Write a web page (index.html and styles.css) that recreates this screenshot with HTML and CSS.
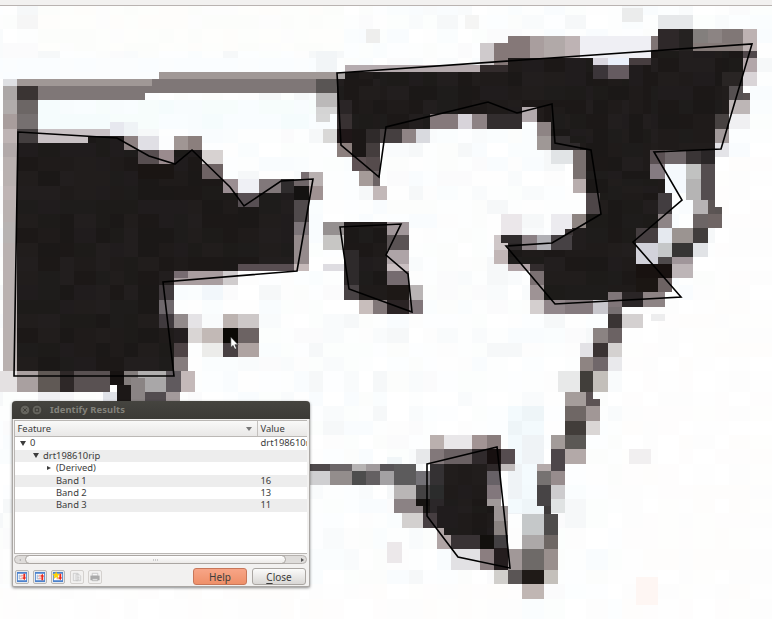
FILE: index.html
```html
<!DOCTYPE html>
<html lang="en">
<head>
<meta charset="utf-8">
<title>Identify Results</title>
<link rel="stylesheet" href="styles.css">
</head>
<body>
<main class="canvas">
  <svg class="map" viewBox="0 0 772 619">
    <g id="raster" shape-rendering="crispEdges"></g>
    <g class="outline">
      <path d="M18 132 117 138 149 156 175 164 192 150 230 187 244 206 281 181 313 179 297 271 163 282 174 376H14Z"/>
      <path d="M337 73 752 44 721 149 654 152 682 200 633 242 681 297 555 304 506 246 552 243 601 214 591 150 555 143 552 104 517 113 488 102 386 127 379 177 341 145Z"/>
      <path d="M340 227 401 224 386 255 408 274 412 312 349 289Z"/>
      <path d="M427 464 497 447 510 568 458 557 427 516Z"/>
    </g>
    <path class="pointer" d="M230.800 337v10.500l2.300-2.100 1.700 3.900 1.800-.8-1.700-3.800h3.200Z"/>
  </svg>
  <div class="top-edge"></div>

  <section class="dialog">
    <header class="titlebar">
      <svg class="window-buttons" viewBox="0 0 24 12">
        <circle cx="6" cy="6" r="4.900"/><circle cx="18" cy="6" r="4.900"/>
        <path d="m4.200 4.200 3.600 3.600m0-3.600L4.200 7.800M16.300 4.300h3.400v3.400h-3.400Z"/>
      </svg>
      <span class="title">Identify Results</span>
    </header>
    <div class="tree">
      <div class="row head"><span class="feature">Feature</span><i class="down sort"></i><span class="value">Value</span></div>
      <div class="row"><span class="feature l0"><i class="down"></i>0</span><span class="value">drt198610rip</span></div>
      <div class="row alt"><span class="feature l1"><i class="down"></i>drt198610rip</span></div>
      <div class="row"><span class="feature l2"><i class="right"></i>(Derived)</span></div>
      <div class="row alt"><span class="feature l3">Band 1</span><span class="value">16</span></div>
      <div class="row"><span class="feature l3">Band 2</span><span class="value">13</span></div>
      <div class="row alt"><span class="feature l3">Band 3</span><span class="value">11</span></div>
    </div>
    <div class="scrollbar"><i class="arrow-left"></i><div class="thumb"><i></i><i></i><i></i></div><i class="arrow-right"></i></div>
    <footer class="actions">
      <button class="tool"><svg viewBox="0 0 13 13"><path fill="#4c82cc" d="M1 1h11v11H1z"/><path fill="#fff" d="M2 3h9v7H2z"/><path stroke="#7799c3" d="M3.500 4v5M4 5.500h2M4 8.500h2"/><path fill="#f4aaa0" d="M5 4h3v2H5zM5 7h3v2H5z"/><path fill="#e9281c" d="M8 3h2v4h1L9 10 7 7h1z"/></svg></button>
      <button class="tool"><svg viewBox="0 0 13 13"><path fill="#4c82cc" d="M1 1h11v11H1z"/><path fill="#fff" d="M2 3h9v7H2z"/><path stroke="#7799c3" d="M3.500 4v5M4 5.500h2M4 8.500h2"/><path fill="#f4aaa0" d="M5 4h3v2H5zM5 7h3v2H5z"/><path fill="#e9281c" d="m9 3 2 3h-1v4H8V6H7z"/></svg></button>
      <button class="tool"><svg viewBox="0 0 13 13"><path fill="#4c82cc" d="M1 1h11v11H1z"/><path fill="#fff" d="M2 3h9v7H2z"/><path fill="#f4aaa0" d="M5 7h3v2H5z"/><path fill="#e9281c" d="M8 3h2v4h1L9 10 7 7h1z"/><path fill="#ffd900" stroke="#eebb10" stroke-width=".4" d="m4.500.800 1 2.500 2.700.2-2 1.800.7 2.900-2.400-1.600L2 8.200l.7-2.900-2-1.800 2.700-.2z"/></svg></button>
      <button class="tool off"><svg viewBox="0 0 13 13"><path fill="#eee" stroke="#c4c4c4" d="M2.500 2.500h5v8h-5zM5.500 3.500h3l2 2v5h-5z"/><path stroke="#ccc" d="M7 7h2M7 9h2"/></svg></button>
      <button class="tool off"><svg viewBox="0 0 13 13"><path fill="#f5f5f5" stroke="#bbb" d="M3.500 2.500h6v3h-6z"/><path fill="#a9a9a9" d="M1.500 5h10v5h-10z"/><path fill="#eee" stroke="#aaa" d="M3.500 8.500h6v2h-6z"/></svg></button>
      <button class="button help">Help</button>
      <button class="button"><u>C</u>lose</button>
    </footer>
  </section>
</main>
<script src="map.js"></script>
</body>
</html>
```
FILE: styles.css
```css
* { box-sizing: border-box; }
body { margin: 0; overflow: hidden; font: 9.4px/12px "Noto Sans", sans-serif; color: #3c3c3c; }
.canvas { position: relative; width: 772px; height: 619px; background: #fdfefe; }
.map { display: block; width: 772px; height: 619px; }
.outline { fill: none; stroke: #000; stroke-width: 1.6; }
.pointer { fill: #fff; stroke: #222; stroke-width: .6; }
.top-edge { position: absolute; inset: 0 0 auto; height: 6px; background: #f2f1f0; border-bottom: 1px solid #b9b3b1; }

.dialog { position: absolute; left: 12px; top: 401px; width: 298px; height: 186px; display: flex; flex-direction: column; background: #f2f1f0; border: 1px solid #aaa7a4; border-top: 0; border-radius: 4px 4px 2px 2px; box-shadow: 0 1px 3px #0007; }
.titlebar { height: 18px; flex: none; margin: 0 -1px; padding-left: 7px; display: flex; align-items: center; gap: 7px; border-radius: 4px 4px 0 0; background: linear-gradient(#45443f, #3b3a36); }
.window-buttons { width: 24px; height: 12px; fill: #65645e; stroke: #35342f; stroke-width: .8; }
.title { font-weight: 700; color: #83827b; font-size: 9.4px; letter-spacing: .08px; }

.tree { height: 134px; flex: none; margin: 1px 2px 0 1px; border: 1px solid #bab7b4; border-right: 0; background: #fff; overflow: hidden; }
.row { display: flex; height: 12.4px; line-height: 12.4px; white-space: nowrap; overflow: hidden; }
.alt { background: #ededed; }
.head { height: 16.400px; line-height: 16.400px; background: linear-gradient(#f9f9f8, #e9e8e7); border-bottom: 1px solid #bbb8b5; position: relative; }
.feature { width: 242.5px; flex: none; display: flex; align-items: center; }
.head .feature { padding-left: 2.500px; border-right: 1px solid #c4c1be; }
.value { padding-left: 3px; }
.l0 { padding-left: 5px; gap: 4px; }
.l1 { padding-left: 18px; gap: 4px; }
.l2 { padding-left: 32px; gap: 5px; }
.l3 { padding-left: 41px; }
.down { border: 3px solid transparent; border-top: 5px solid #3c3c3c; border-bottom: 0; }
.right { border: 2.500px solid transparent; border-left: 4px solid #3c3c3c; border-right: 0; }
.sort { position: absolute; left: 231px; top: 6px; border-top-color: #777; border-top-width: 4px; }

.scrollbar { height: 9px; flex: none; margin: 1px 2px 0 1px; display: flex; align-items: center; border: 1px solid #b5b1ae; border-radius: 5px; background: #dedcda; }
.thumb { width: 261px; height: 9px; margin-left: 8px; display: flex; justify-content: center; align-items: center; gap: 1px; border: 1px solid #aaa6a2; border-radius: 5px; background: linear-gradient(#fff, #eceae8); }
.thumb i { width: 1px; height: 2px; background: #ccc; }
.arrow-left { width: 0; margin-left: 4px; margin-right: -4px; border: 1.5px solid transparent; border-right: 2px solid #aaa; border-left: 0; }
.arrow-right { margin-left: auto; margin-right: 2px; border: 2px solid transparent; border-left: 3px solid #555; border-right: 0; }

.actions { height: 17px; margin-top: 4px; display: flex; align-items: center; gap: 4px; padding: 0 3px 0 2px; }
.tool { width: 14px; height: 14px; flex: none; padding: 0; border: 1px solid #b8b5b2; border-radius: 2px; background: #f2f1f0; display: flex; }
.tool svg { width: 12px; height: 12px; fill: none; stroke-width: .8; }
.off { border-color: #d4d1ce; }
.button { width: 54px; height: 17px; padding: 0; font: inherit; font-size: 10px; line-height: 14px; color: #3c3c3c; border: 1px solid #aaa6a2; border-radius: 3px; background: linear-gradient(#fbfbfa, #d9d7d5); }
.help { margin-left: auto; border-color: #c7775a; background: linear-gradient(#f7a587, #ef9069); }
u { text-underline-offset: 2px; }
.tool + .tool { margin-left: .2px; }
.help + .button { margin-left: 1px; }
```
FILE: map.js
```js
// Raster cell boundaries.
const xs = [0,3,17,38,60,74,96,110,124,138,159,174,188,202,223,238,259,281,294,309,323,344,359,373,387,409,423,437,458,472,487,508,522,544,565,586,608,622,643,658,679,693,715,729,750,772];
const ys = [6,15,29,43,58,72,86,100,114,129,143,157,171,186,200,214,228,243,257,271,285,300,314,328,343,357,371,392,406,421,435,449,464,485,499,513,528,549,570,584,599,619];

// Deterministic variation between neighbouring cells.
let seed = 71;
const rnd = () => (seed = (seed * 16807) % 2147483647) / 2147483647;
const light = ['fdfeff','fafdfe','fdfdfd','fcfefd','fefefe','f9fcfe','fbfbfc','f9fbfc','fdfefe','f6f8f9','ffffff','fcfdfc','fdfefe','fcfeff'];
const warm = ['fefefd','fefdfd','fdfdfd','ffffff','fefefe','fefdfc','fdfdfd'];
const dark = ['1f1b1a','1c1817','211d1c','1e1c1b','221e1e','1b1817','201c1d','1d1b19'];

let out = '';
const rect = (x1, x2, y1, y2, c) => {
  out += `<rect x="${x1}" y="${y1}" width="${x2 - x1}" height="${y2 - y1}" fill="#${c}"/>`;
};
const tiles = (x1, x2, y1, y2, colors) => {
  const cx = [x1, ...xs.filter(x => x > x1 && x < x2), x2];
  const cy = [y1, ...ys.filter(y => y > y1 && y < y2), y2];
  for (let j = 1; j < cy.length; j++)
    for (let i = 1; i < cx.length; i++)
      rect(cx[i - 1], cx[i], cy[j - 1], cy[j], colors[Math.floor(rnd() * colors.length)]);
};

tiles(0, 772, 6, 619, light);
tiles(38, 344, 6, 51, ['fdfefc','fefefc','fcfdfb','fefdfb','fdfdfd']);
tiles(715, 772, 157, 392, warm);
tiles(622, 772, 300, 619, warm);
tiles(300, 522, 584, 619, warm);
tiles(0, 300, 588, 619, warm);
tiles(38, 316, 100, 129, ['f5fcfd','f8fcfe','f7fdfc','f9fdff']);
tiles(0, 316, 58, 79, ['fafdff','fbfdfe']);
tiles(508, 544, 406, 514, ['eef5f8','f4fbfe','eff3f6','f3fafd']);

// x1 x2 y1 y2 colour; "d" marks dense shadow cells.
const cells = `
17 138 143 371 d;110 124 136 143 d;138 159 164 371 d;174 202 150 271 d;159 174 164 285 d;202 223 179 271 d;223 238 193 271 d;238 259 207 264 d;259 294 193 264 d
159 174 328 371 d;17 38 129 143 433e3f;38 110 129 136 c8c1c4;38 88 136 143 c8c1c4;88 110 136 143 d;110 124 122 136 e7e8ef;124 138 122 136 eff3f6
124 138 136 150 8d8182;138 159 136 150 e0dfe5;138 159 150 164 574e50;159 174 136 150 fcfdfe;159 174 150 164 9a8b8e;174 188 136 150 a09694;188 202 136 150 8b7f7d;138 159 164 179 1a1513;159 174 164 179 1a1513
202 223 150 164 d7d2d1;202 223 164 179 6e6364;223 238 179 193 9a8e92;238 259 179 193 eff0f5;238 259 193 207 574f53;259 281 179 193 81787a;281 294 179 193 2f2c2d;294 309 179 186 6f6668;294 309 186 200 141211;294 309 200 222 504a4c;301 309 172 179 776d70;309 323 172 186 b8b0b0;309 323 186 200 9f9292;294 309 222 235 7d7579;294 309 235 264 958b8c;238 294 264 271 594e52;294 309 264 271 c5b9b9
174 188 271 278 776c71;188 223 271 278 a89d9f;174 223 278 285 a89d9f;223 238 271 285 d0cccd;159 174 285 300 403a3d;159 174 300 314 6e686c;159 174 314 328 403a3e;174 188 314 328 928a8b;174 188 328 343 231e1f;174 188 343 357 4e4446;174 188 357 371 857c7d;188 202 314 328 e5e3e6;188 202 328 343 d9d5d4
0 17 371 392 e4e1e2;17 38 371 392 a9a0a0;38 60 371 392 605955;60 74 371 392 2e2828;74 110 371 392 595152;110 124 371 385 171312;117 131 385 401 1c1817;124 138 371 385 837d7c;131 145 378 401 8a8484;138 166 371 378 b1afaf;145 166 378 392 a9a7a8;145 166 392 401 524c4f;166 181 371 392 605a5e;166 180 392 401 a39a9b;181 195 371 392 c4b9b9;38 60 392 401 f0f0f3;60 74 392 401 f6f6f8;103 117 392 401 e0e2e8
3 17 79 86 dfe0e3;3 17 86 100 aca7a6;3 17 100 114 b1acab;3 17 114 129 a89d9c;3 17 129 143 beb4b4;3 17 143 157 b1a9a9;3 17 157 371 b9b1b0;3 17 186 200 beb4b4;3 17 222 243 b7b3b2
17 152 79 86 a09896;159 337 72 79 a09896;152 316 79 93 7f7777;38 145 86 100 7f7777;145 152 86 93 7f7777;17 38 86 100 3a3433;17 38 100 114 6c6665;17 38 114 129 767070;316 337 79 93 595554;316 337 93 107 bbb9b9;316 337 107 114 d4d4d4;316 330 114 122 d6d6d6;323 337 129 143 d9d8d7;316 337 51 72 f2f5f7;17 38 15 29 f6f6f6
337 380 79 129 d;380 480 72 114 d;345 380 72 79 d;337 345 72 79 aaa6a5;345 480 65 72 b5abae;337 352 100 114 2a2526;337 352 114 129 383132;337 352 129 143 1f1718;337 352 143 157 8b7f7d;352 366 129 157 1b1716;352 366 157 171 5e5254;366 380 129 143 2f2a2a;366 380 143 157 443d3d;366 380 157 171 554b4c;359 373 171 179 a59b99;359 373 179 186 a59b99;373 380 171 186 6b6263;373 387 186 200 c2b8b8
380 430 114 129 d;380 402 129 143 453f40;402 416 129 143 8f8485;416 430 129 143 d9dadf;430 458 114 129 85797b;458 472 114 129 d8d4da;472 487 114 129 8d8284;487 522 114 129 322d2e;480 508 65 72 322b2c;480 570 72 107 d;508 570 58 72 d;487 522 107 114 d;472 487 107 114 d;522 537 107 122 b3aaad;537 544 107 122 211c1b;544 551 107 122 1c1716;537 551 122 136 8e8484;537 551 136 150 9f9896;551 573 107 136 d;551 586 136 150 2e2a2b;551 573 150 164 e1e4e6
480 494 43 65 cfcacc;494 508 43 65 857878;508 530 36 58 857878;530 544 36 58 a99e9e;544 565 36 58 b1a9a8;565 580 36 58 beb3b4;580 651 36 58 efeff4;570 593 58 143 d;593 629 79 150 d;629 651 65 150 d;651 722 51 150 d;722 743 51 72 d;651 665 36 43 7f7474;651 658 43 51 7f7474
593 608 58 65 d9d6df;608 629 58 65 eaf0fb;593 608 65 79 3b3539;608 629 65 79 655b60;629 651 58 65 473e40;658 679 29 51 2e2829;679 693 29 51 252221;693 708 29 43 837f7d;708 722 29 43 8c8483;722 743 29 43 807776;693 743 43 51 857b79;743 757 29 51 bdb2b2;743 757 51 58 50474a;743 757 58 72 b2a6a9;743 757 72 86 d9d4d7;722 743 72 86 292524;722 729 86 114 d;729 743 86 100 555051;743 750 93 100 5a5252;729 750 100 114 bdb6b6;715 729 114 129 474241;715 729 129 143 a29a9a;715 729 143 157 e4e4e8;729 750 114 129 f0f0f2
570 593 136 143 d;580 650 143 179 d;573 586 150 179 79706f;573 586 179 193 b8adad;586 665 179 186 d;586 672 186 193 d;586 658 193 228 d;586 600 193 214 4e4648;650 665 150 164 5a5053;665 686 150 164 6f676a;686 701 150 164 3a3536;701 715 150 164 2a2627;701 715 164 200 544d4f;708 715 200 214 5c5554;715 722 207 214 5a5453;650 665 164 179 857b81;658 672 193 214 423d40;665 686 164 193 f5f9fd;686 701 164 179 c1c2c1;686 701 179 200 b5b4b4;693 708 200 214 b6b3b4;693 708 214 228 6c6565;708 722 214 228 6f6564;693 708 228 243 413d3c
672 693 228 243 9b9491;672 693 243 257 363534;693 708 243 257 e1e3e6;658 672 228 243 e5e9ef;658 672 243 257 c5c7c8;636 658 228 243 453e40;636 658 243 264 d2d2da;658 672 257 264 4e4a4b;672 693 257 264 a0969a;672 693 264 278 bdb5b7;636 672 264 278 181210;586 636 228 300 d;636 658 278 292 1b1613;658 672 214 228 8d8486;658 672 278 292 6d6363
544 586 250 300 d;572 586 228 250 211d1d;572 586 214 228 8e8582;551 572 214 235 ecebef;565 573 229 236 3a3334;551 572 235 250 464144;537 551 235 250 b0b0b5;522 537 235 250 8a8084;501 522 235 243 2f2b2c;508 522 243 250 2b2728;494 501 235 250 cfc7c8;501 508 243 250 cfc7c8;494 508 250 264 c1b6b6;508 544 250 264 d;508 530 264 271 b0a3a6;530 544 264 271 322c2d;530 544 271 285 7b7173;530 544 285 300 9e9395;530 544 300 314 d4cfcf;544 565 300 314 91868a;565 593 300 314 857a7e;593 608 300 314 c8c7cd
608 622 292 307 807679;622 643 292 307 2a2526;643 665 292 307 8d8384;608 622 307 314 777072;608 622 314 328 3a3434;622 643 314 328 d4d0d0;593 608 328 343 8b8382;608 622 328 343 6b6263;593 608 343 357 3a3333;608 622 343 357 d4d1d0;580 593 343 357 e3e2e6;580 593 357 371 8e8482;593 608 357 371 70676a;608 622 357 371 e9e9ec;580 593 371 392 413e3a;593 608 371 392 c3bfba;558 580 371 392 e8e9e9
344 387 222 300 d;323 344 222 235 959090;323 344 235 250 c7c6c4;323 344 264 271 dedce1;387 409 222 235 a1979a;387 409 235 250 5a5354;387 409 250 264 aea4a7;387 409 264 271 c9bfc1;387 409 271 285 756b6f;387 409 285 300 1d1816;409 423 285 300 b9b4b4;387 409 300 314 2a2324;409 423 300 314 80767a;373 387 300 314 817778;359 373 300 314 c8bebc;344 359 250 285 2e2a2b;344 359 285 300 484244
223 238 314 328 bcb3b0;238 259 314 328 cdc8c8;202 223 328 343 c2b9b6;223 238 328 343 0b0905;238 259 328 343 6c6363;223 238 343 357 484042;238 259 343 357 aea3a1;202 223 343 357 ececea
309 330 464 471 4e494b;330 352 464 471 6b6668;352 366 464 471 b6b3b3;366 380 464 471 a09a9c;380 394 464 471 575457;394 416 464 485 5c5b5c;309 330 471 485 cfcfd1;330 352 471 485 938d8c;352 366 471 485 4d4d4d;366 380 471 485 646062;380 394 471 485 a3a1a3;416 430 471 485 737176;394 416 485 499 b9b6b6;416 430 485 499 444243;394 423 499 513 8b8284;416 430 499 506 161311;423 437 506 513 1a1715;402 423 513 528 d3d0cf;423 437 513 528 463e41
430 444 435 449 bab0ae;444 472 435 449 e9e7e9;472 487 435 449 a29494;487 501 435 449 887c7c;430 444 449 464 82787a;444 472 449 464 6a6163;472 487 449 464 302a2c;487 501 449 464 171010;501 515 449 464 554c4f;501 515 464 471 c0bbbb;430 444 464 485 343133;430 444 485 499 2b2c2c;430 444 499 513 2b2729;444 487 464 506 d;437 494 506 528 d;444 494 528 535 d;487 501 464 471 2e2829;487 501 471 485 676166;487 501 485 499 82777c;487 501 499 506 a09999;494 508 506 521 9c9595;494 508 521 535 8a8381;494 508 535 548 434042;494 508 548 570 241d1e
451 480 535 549 383234;480 494 535 549 12100d;437 444 528 549 b0a5a5;444 451 535 549 b0a5a5;480 494 549 570 8b7e80;451 480 549 570 e2e1e4;494 508 570 584 d1cfcc;508 522 570 584 5a5555;508 522 549 570 a19898;522 544 514 535 c5c8c9;522 544 535 549 aca8a8;522 544 549 570 6e6a68;522 544 570 584 1f1a17;522 544 584 599 c0b6b3;544 558 514 535 4e4c4b;544 558 535 549 6e6764;544 558 549 570 998f8d;544 558 570 584 c4c0bb
544 551 506 514 3e3b3b;537 551 485 506 474445;551 565 485 499 cdccce;551 565 499 513 e0e3e3;537 551 471 485 767271;537 551 464 471 b4aaaa;551 565 471 485 978c8d;551 565 449 471 4d464a;551 565 435 449 a29b99;565 586 449 464 b3a9a8;565 586 435 449 5b5855;565 586 421 435 423d3a;565 586 406 421 6f6765;565 586 392 406 a59d9b;586 600 399 406 5c5354;586 593 392 399 5c5354;586 600 406 421 a19796;586 600 421 435 dad6d5
387 402 457 464 f1f6f8;416 430 449 464 e7e8ea;387 402 542 563 ece8ea;629 651 449 464 f1eff0;636 658 577 605 fef6f3;501 522 214 235 ebe7ea;622 643 8 22 ebecec;658 693 15 29 e6e8ea;465 479 15 29 f5f5f4;366 380 29 43 eeeeed;202 223 285 300 f2f7fb;651 665 314 321 ededee`;
for (const cell of cells.trim().split(/[;\n]+/)) {
  const [x1, x2, y1, y2, c] = cell.trim().split(' ');
  if (c === 'd') tiles(+x1, +x2, +y1, +y2, dark);
  else rect(x1, x2, y1, y2, c);
}
document.getElementById('raster').innerHTML = out;
```
